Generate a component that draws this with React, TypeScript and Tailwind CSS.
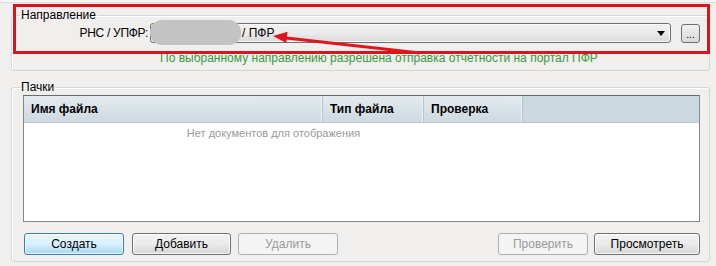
import React from 'react';

const btnBase =
  'h-[22px] rounded-[3px] border text-[12px] leading-[20px] flex items-center justify-center';

const Button: React.FC<{ label: string; width: string; kind?: 'default' | 'normal' | 'disabled' }> = ({
  label,
  width,
  kind = 'normal',
}) => {
  if (kind === 'default') {
    return (
      <button
        className={`${btnBase} ${width} border-[#3c7fb1] bg-gradient-to-b from-[#eaf6fd] via-[#d9f0fc] to-[#a7d9f5] text-black shadow-[inset_0_0_0_1px_rgba(255,255,255,0.7)]`}
      >
        {label}
      </button>
    );
  }
  if (kind === 'disabled') {
    return (
      <button className={`${btnBase} ${width} border-[#adb2b5] bg-[#f4f4f4] text-[#9a9a9a]`}>{label}</button>
    );
  }
  return (
    <button
      className={`${btnBase} ${width} border-[#707070] bg-gradient-to-b from-[#f2f2f2] via-[#ebebeb] to-[#d6d6d6] text-black shadow-[inset_0_0_0_1px_rgba(255,255,255,0.8)]`}
    >
      {label}
    </button>
  );
};

const HeaderCell: React.FC<{ label: string; width: string }> = ({ label, width }) => (
  <div
    className={`${width} h-full shrink-0 flex items-center pl-[7px] font-bold bg-gradient-to-b from-[#e4ebef] to-[#cdd9e0] border-r border-[#b3c2cc] shadow-[inset_-1px_0_0_#eef3f6]`}
  >
    {label}
  </div>
);

const App: React.FC = () => {
  return (
    <div className="relative w-[716px] h-[266px] overflow-hidden bg-[#f0efee] text-[12px] text-black font-['Liberation_Sans',Arial,sans-serif]">
      <div className="h-[3px] bg-[#f7f6f6] border-b border-[#dddcdc]" />

      {/* Направление */}
      <fieldset className="mx-[11px] mt-[5px] w-[699px] min-w-0 border border-[#d6d6d6] rounded-[3px] px-0 pb-[5px] shadow-[inset_1px_1px_0_#ffffff]">
        <legend className="ml-[8px] px-[1px] leading-[14px]">Направление</legend>
        <div className="flex items-center pt-[1px]">
          <div className="w-[136px] text-right leading-[14px] tracking-[-0.3px]">РНС / УПФР:</div>
          <div className="ml-[2px] w-[521px] h-[20px] flex items-center justify-between rounded-[3px] border border-[#707070] bg-gradient-to-b from-[#f2f2f2] via-[#ebebeb] to-[#d8d8d8] shadow-[inset_0_0_0_1px_rgba(255,255,255,0.8)]">
            <span className="pl-[91px] leading-[14px]">/ ПФР</span>
            <svg width="8" height="5" viewBox="0 0 8 5" className="mr-[5px]">
              <path d="M0 0 L8 0 L4 5 Z" fill="#000" />
            </svg>
          </div>
          <div className="ml-[10px] w-[19px] h-[19px] flex items-end justify-center pb-[3px] rounded-[3px] border border-[#707070] bg-gradient-to-b from-[#f2f2f2] to-[#d8d8d8] text-[10px] leading-[8px]">
            ...
          </div>
        </div>
        <div className="mt-[8px] pl-[148px] leading-[14px] text-[#3a9a3a]">
          По выбранному направлению разрешена отправка отчетности на портал ПФР
        </div>
      </fieldset>

      {/* Пачки */}
      <fieldset className="mx-[11px] mt-[9px] w-[699px] min-w-0 border border-[#d6d6d6] rounded-[3px] pl-[11px] pr-[9px] pb-[6px] shadow-[inset_1px_1px_0_#ffffff]">
        <legend className="ml-[-3px] px-[1px] leading-[14px]">Пачки</legend>
        <div className="mt-[1px] h-[127px] border border-[#828790] border-t-[#6a6a6a] bg-white flex flex-col">
          <div className="h-[27px] flex bg-[#cbd8df] border-b border-[#b9c6cf]">
            <HeaderCell label="Имя файла" width="w-[299px]" />
            <HeaderCell label="Тип файла" width="w-[101px]" />
            <HeaderCell label="Проверка" width="w-[99px]" />
          </div>
          <div className="w-[499px] pt-[3px] text-center text-[11px] leading-[14px] text-[#9a9a9a]">
            Нет документов для отображения
          </div>
        </div>
        <div className="mt-[11px] flex items-center pl-[1px]">
          <Button label="Создать" width="w-[100px]" kind="default" />
          <Button label="Добавить" width="w-[99px] ml-[8px]" />
          <Button label="Удалить" width="w-[100px] ml-[7px]" kind="disabled" />
          <Button label="Проверить" width="w-[90px] ml-auto" kind="disabled" />
          <Button label="Просмотреть" width="w-[106px] ml-[6px]" />
        </div>
      </fieldset>

      {/* annotation overlay: redaction, red frame and arrow */}
      <div className="absolute left-[150px] top-[20px] w-[91px] h-[25px] rounded-[12px] bg-[#c3c3c3] blur-[0.6px]" />
      <div className="absolute left-[13px] top-[4px] w-[697px] h-[50px] border-[3px] border-[#d9141f] pointer-events-none" />
      <svg className="absolute left-0 top-0 pointer-events-none" width="716" height="266">
        <line x1="420" y1="53" x2="284" y2="37.8" stroke="#e0161f" strokeWidth="3" />
        <polygon points="273,36 287.5,31.8 286.3,43" fill="#e0161f" />
      </svg>
    </div>
  );
};

export default App;
